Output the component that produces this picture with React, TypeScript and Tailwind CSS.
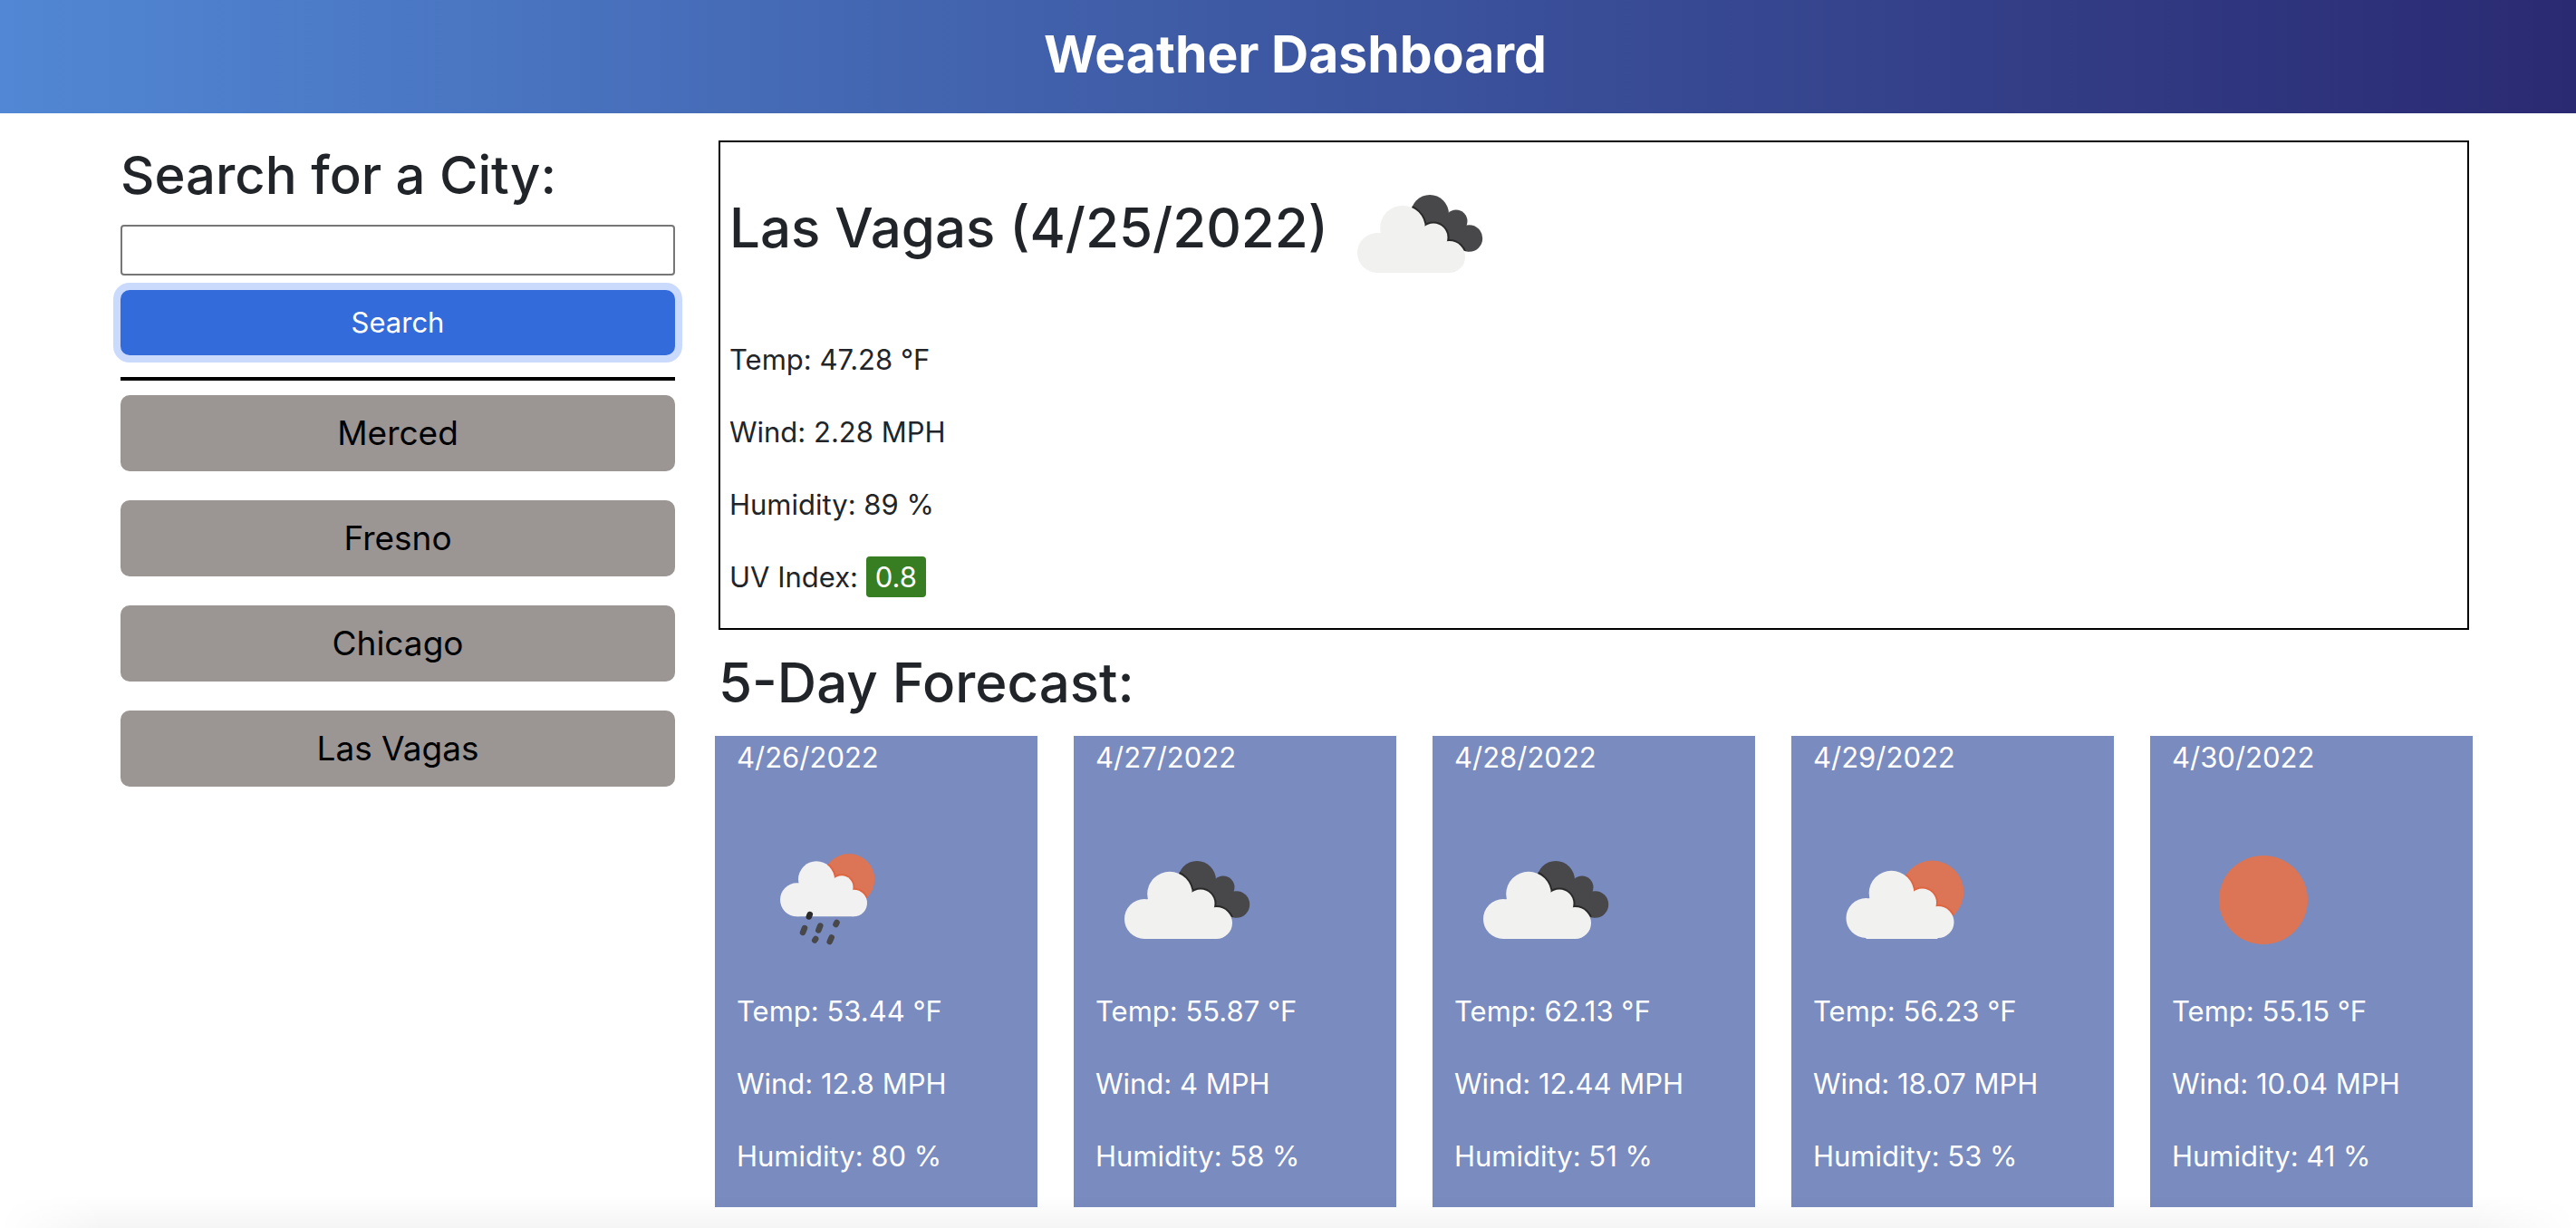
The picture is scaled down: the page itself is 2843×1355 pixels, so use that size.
import React from "react";

type Kind = "clouds" | "partly" | "rain" | "sun";

type Day = {
  date: string;
  icon: Kind;
  temp: string;
  wind: string;
  humidity: string;
};

const cities = ["Merced", "Fresno", "Chicago", "Las Vagas"];

const days: Day[] = [
  { date: "4/26/2022", icon: "rain", temp: "53.44", wind: "12.8", humidity: "80" },
  { date: "4/27/2022", icon: "clouds", temp: "55.87", wind: "4", humidity: "58" },
  { date: "4/28/2022", icon: "clouds", temp: "62.13", wind: "12.44", humidity: "51" },
  { date: "4/29/2022", icon: "partly", temp: "56.23", wind: "18.07", humidity: "53" },
  { date: "4/30/2022", icon: "sun", temp: "55.15", wind: "10.04", humidity: "41" },
];

function DarkCloud() {
  return (
    <>
      <circle cx="112" cy="79" r="21" />
      <circle cx="141" cy="87" r="12.5" />
      <circle cx="155.500" cy="106" r="14.700" />
      <path d="M112 100L131 80L149 92L155 120.500L137 116L115 96Z" />
    </>
  );
}

function Cloud() {
  return (
    <>
      <circle cx="54" cy="122" r="22" />
      <circle cx="82" cy="94.600" r="24.800" />
      <circle cx="116" cy="105" r="15.500" />
      <circle cx="133.500" cy="126.500" r="17.500" />
      <path d="M54 144V103L73 88L101 94L125 108L133.500 144Z" />
    </>
  );
}

function SmallCloud() {
  return (
    <>
      <circle cx="66.500" cy="100.800" r="18.500" />
      <circle cx="88" cy="78.300" r="20" />
      <circle cx="116" cy="86.800" r="12.500" />
      <circle cx="129.200" cy="104.500" r="14.800" />
      <path d="M66.500 119.300V85L82 72L104 79L123 89L129.200 119.300Z" />
    </>
  );
}

/* Each icon draws a darker rim on the back shape where the front cloud overlaps it. */
function WeatherIcon({ kind, className = "" }: { kind: Kind; className?: string }) {
  const clip = React.useId();
  return (
    <svg viewBox="0 0 200 200" className={`size-[200px] shrink-0 ${className}`} aria-hidden="true">
      {kind === "clouds" && (
        <>
          <clipPath id={clip}>
            <DarkCloud />
          </clipPath>
          <g fill="#48484a">
            <DarkCloud />
          </g>
          <g clipPath={`url(#${clip})`} stroke="#29292a" strokeWidth="4">
            <Cloud />
          </g>
          <g fill="#f1f1f0">
            <Cloud />
          </g>
        </>
      )}
      {kind === "partly" && (
        <>
          <clipPath id={clip}>
            <circle cx="131.500" cy="92.400" r="34.800" />
          </clipPath>
          <circle cx="131.500" cy="92.400" r="34.800" fill="#dc7555" />
          <g clipPath={`url(#${clip})`}>
            <g transform="translate(4.500 -1)" stroke="#e06541" strokeWidth="4">
              <Cloud />
            </g>
          </g>
          <g transform="translate(4.500 -1)" fill="#f1f1f0">
            <Cloud />
            <path d="M54 143H133V145H54Z" />
          </g>
        </>
      )}
      {kind === "rain" && (
        <>
          <clipPath id={clip}>
            <circle cx="124" cy="78.300" r="28.300" />
          </clipPath>
          <circle cx="124" cy="78.300" r="28.300" fill="#dc7555" />
          <g clipPath={`url(#${clip})`} stroke="#e06541" strokeWidth="4">
            <SmallCloud />
          </g>
          <g fill="#f1f1f2">
            <SmallCloud />
          </g>
          <g stroke="#48484a" strokeWidth="6.500" strokeLinecap="round">
            <path d="M80.800 117L79.800 119.500" stroke="#2b2b2d" />
            <path d="M75 132L73 137" />
            <path d="M92.300 129.500L90.300 134.500" />
            <path d="M110.500 126L109.500 128" />
            <path d="M87.200 144L86.200 145.500" />
            <path d="M104.700 142.500L102.700 147" />
          </g>
        </>
      )}
      {kind === "sun" && <circle cx="101" cy="101" r="49" fill="#dc7555" />}
    </svg>
  );
}

export default function App() {
  return (
    <div className="relative min-h-screen bg-white font-['Inter',sans-serif] text-[31px] leading-[48px] text-[#212529]">
      <header className="bg-linear-to-r from-[#5187d4] to-[#2a2a72] pt-6 pb-[29px] pl-4 text-center text-white">
        <h1 className="text-[57px] leading-[72px] font-bold">Weather Dashboard</h1>
      </header>

      <main className="flex items-start gap-12 pt-[30px] pr-[118px] pb-[23px] pl-[133px]">
        <aside className="w-[612px] shrink-0">
          <form onSubmit={(e) => e.preventDefault()}>
            <label htmlFor="city" className="block pb-4 text-[58px] leading-[77px] font-medium">
              Search for a City:
            </label>
            <input
              id="city"
              type="text"
              className="block h-14 w-full rounded-[4px] border-2 border-[#767676] bg-white px-2 outline-none"
            />
            <button
              type="submit"
              className="mt-4 block w-full rounded-[10px] bg-[#336bdb] py-3 text-white ring-8 ring-[#cadafd]"
            >
              Search
            </button>
          </form>
          <hr className="mt-6 mb-4 border-t-4 border-black" />
          <ul className="flex flex-col gap-8">
            {cities.map((city) => (
              <li key={city}>
                <button
                  type="button"
                  className="block w-full rounded-[10px] bg-[#9b9594] py-3 text-[37px] leading-[60px] text-black"
                >
                  {city}
                </button>
              </li>
            ))}
          </ul>
        </aside>

        <div className="min-w-0 flex-1">
          <section className="border-2 border-black px-[10px] pb-8">
            <div className="flex items-center">
              <h2 className="pb-3 text-[60px] leading-[77px] font-medium">Las Vagas (4/25/2022)</h2>
              <WeatherIcon kind="clouds" />
            </div>
            <div className="flex flex-col gap-8 pt-4">
              <p>Temp: 47.28 °F</p>
              <p>Wind: 2.28 MPH</p>
              <p>Humidity: 89 %</p>
              <p>
                UV Index: <span className="rounded-[4px] bg-[#377d22] px-[10px] py-1 text-white">0.8</span>
              </p>
            </div>
          </section>

          <h2 className="py-5 text-[60px] leading-[77px] font-medium">5-Day Forecast:</h2>
          <div className="-mx-1 grid grid-cols-5 gap-10">
            {days.map((d) => (
              <article key={d.date} className="bg-[#798bbf] px-6 pb-8 text-white">
                <h3>{d.date}</h3>
                <WeatherIcon kind={d.icon} className="mt-8" />
                <div className="flex flex-col gap-8">
                  <p>Temp: {d.temp} °F</p>
                  <p>Wind: {d.wind} MPH</p>
                  <p>Humidity: {d.humidity} %</p>
                </div>
              </article>
            ))}
          </div>
        </div>
      </main>

      <div className="pointer-events-none absolute inset-x-0 bottom-0 h-9 bg-linear-to-t from-black/4 to-transparent mask-[linear-gradient(to_right,transparent,black_4%,black_96%,transparent)]" />
    </div>
  );
}
